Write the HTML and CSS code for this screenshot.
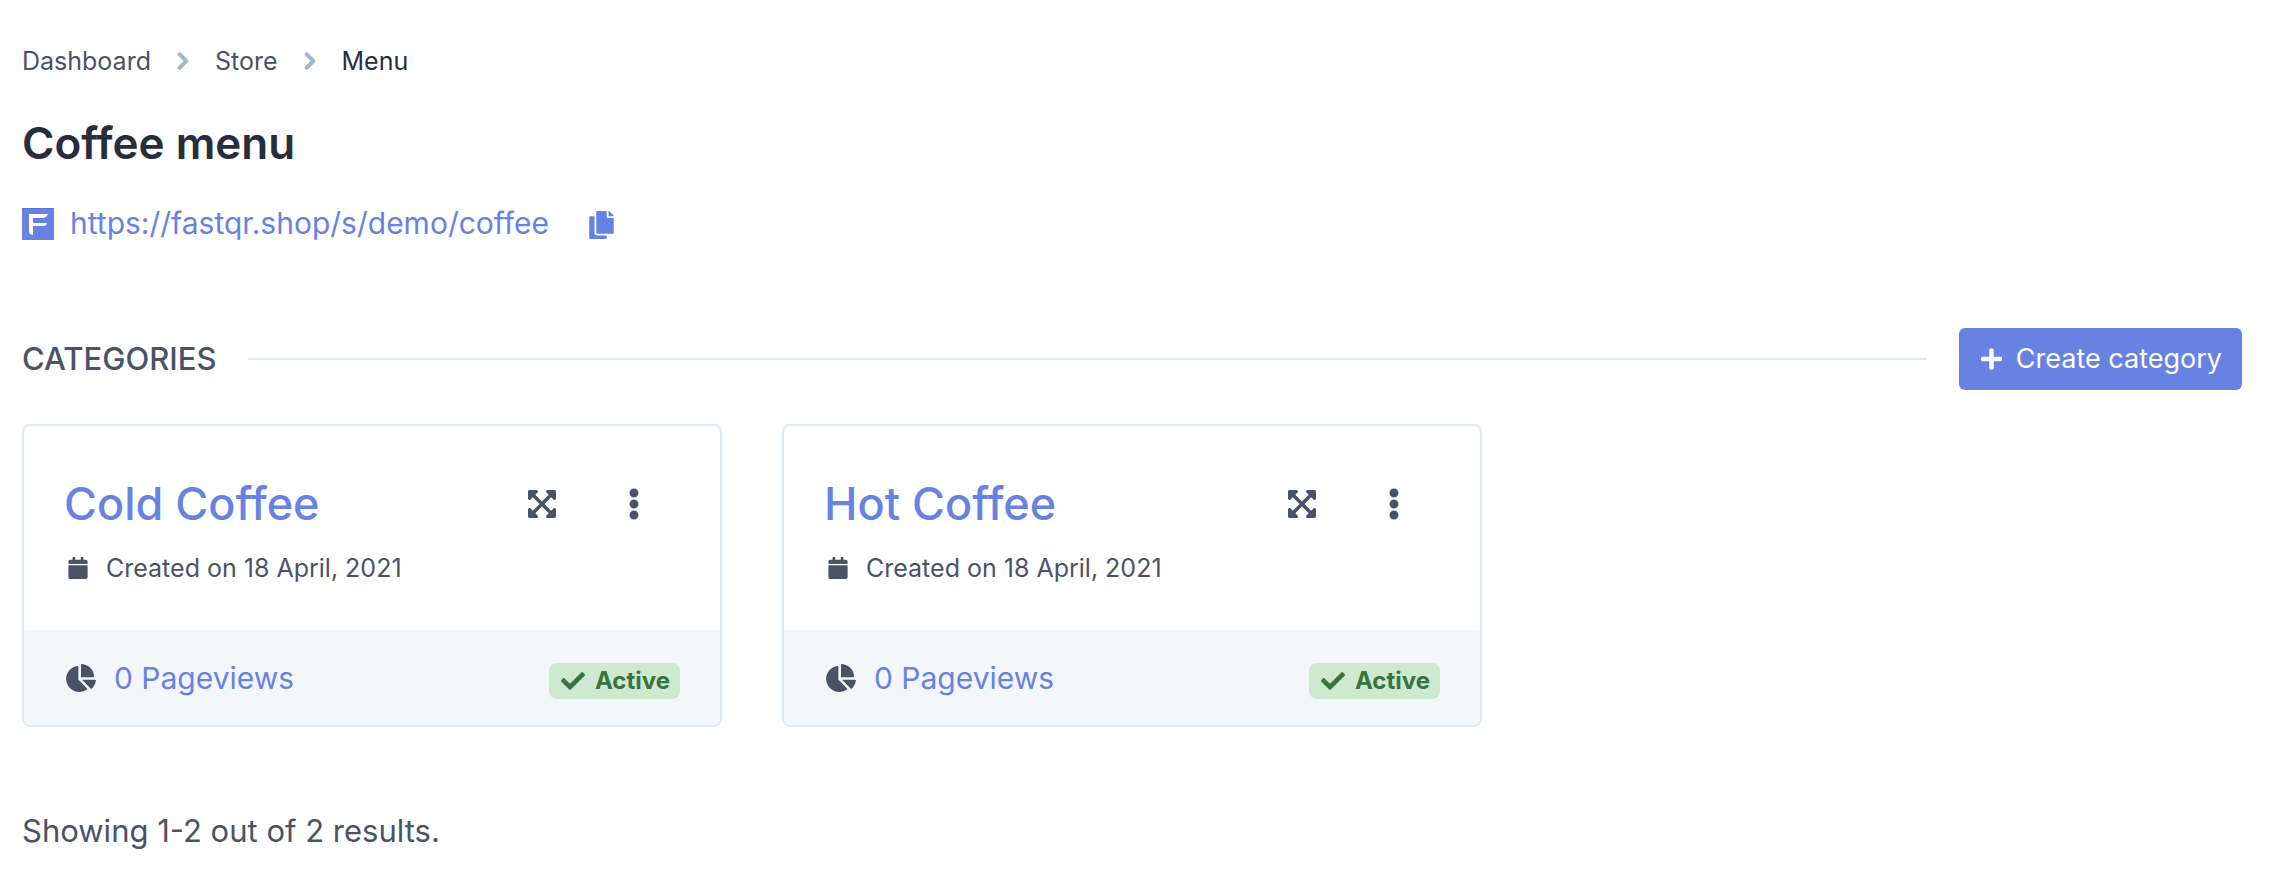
FILE: index.html
```html
<!DOCTYPE html>
<html lang="en">
<head>
<meta charset="utf-8">
<meta name="viewport" content="width=device-width, initial-scale=1">
<title>Coffee menu</title>
<link rel="stylesheet" href="styles.css">
</head>
<body>
<svg class="sprite" aria-hidden="true">
  <symbol id="chevron" viewBox="0 0 20 20"><path d="M7.293 14.707a1 1 0 010-1.414L10.586 10 7.293 6.707a1 1 0 011.414-1.414l4 4a1 1 0 010 1.414l-4 4a1 1 0 01-1.414 0z"/></symbol>
  <symbol id="copy" viewBox="0 0 448 512"><path d="M320 448v40c0 13.255-10.745 24-24 24H24c-13.255 0-24-10.745-24-24V120c0-13.255 10.745-24 24-24h72v296c0 30.879 25.121 56 56 56h168zm0-344V0H152c-13.255 0-24 10.745-24 24v368c0 13.255 10.745 24 24 24h272c13.255 0 24-10.745 24-24V128H344c-13.2 0-24-10.8-24-24zm120.971-31.029L375.029 7.029A24 24 0 0 0 358.059 0H352v96h96v-6.059a24 24 0 0 0-7.029-16.97z"/></symbol>
  <symbol id="plus" viewBox="0 0 448 512"><path d="M416 208H272V64c0-17.67-14.33-32-32-32h-32c-17.67 0-32 14.33-32 32v144H32c-17.67 0-32 14.33-32 32v32c0 17.67 14.33 32 32 32h144v144c0 17.67 14.33 32 32 32h32c17.67 0 32-14.33 32-32V304h144c17.67 0 32-14.33 32-32v-32c0-17.67-14.33-32-32-32z"/></symbol>
  <symbol id="expand" viewBox="0 0 448 512"><path d="M448 344v112a23.94 23.94 0 0 1-24 24H312c-21.39 0-32.09-25.9-17-41l36.2-36.2L224 295.6 116.77 402.9 153 439c15.09 15.1 4.39 41-17 41H24a23.94 23.94 0 0 1-24-24V344c0-21.4 25.89-32.1 41-17l36.19 36.2L184.46 256 77.18 148.7 41 185c-15.1 15.1-41 4.4-41-17V56a23.94 23.94 0 0 1 24-24h112c21.39 0 32.09 25.9 17 41l-36.2 36.2L224 216.4l107.23-107.3L295 73c-15.09-15.1-4.39-41 17-41h112a23.94 23.94 0 0 1 24 24v112c0 21.4-25.89 32.1-41 17l-36.19-36.2L263.54 256l107.28 107.3L407 327.1c15.1-15.2 41-4.5 41 16.9z"/></symbol>
  <symbol id="dots" viewBox="0 0 192 512"><path d="M96 184c39.8 0 72 32.2 72 72s-32.2 72-72 72-72-32.2-72-72 32.2-72 72-72zM24 80c0 39.8 32.2 72 72 72s72-32.2 72-72S135.8 8 96 8 24 40.2 24 80zm0 352c0 39.8 32.2 72 72 72s72-32.2 72-72-32.2-72-72-72-72 32.2-72 72z"/></symbol>
  <symbol id="calendar" viewBox="0 0 448 512"><path d="M12 192h424c6.6 0 12 5.4 12 12v260c0 26.5-21.5 48-48 48H48c-26.5 0-48-21.5-48-48V204c0-6.6 5.4-12 12-12zm436-44v-36c0-26.5-21.5-48-48-48h-48V12c0-6.6-5.4-12-12-12h-40c-6.6 0-12 5.4-12 12v52H160V12c0-6.6-5.4-12-12-12h-40c-6.6 0-12 5.4-12 12v52H48C21.5 64 0 85.5 0 112v36c0 6.6 5.4 12 12 12h424c6.6 0 12-5.4 12-12z"/></symbol>
  <symbol id="pie" viewBox="0 0 544 512"><path d="M527.79 288H290.5l158.03 158.03c6.04 6.04 15.98 6.53 22.19.68 38.7-36.46 65.32-85.61 73.13-140.86 1.34-9.46-6.51-17.85-16.06-17.85zm-15.83-64.8C503.72 103.74 408.26 8.28 288.8.04 279.68-.59 272 7.1 272 16.24V240h223.77c9.14 0 16.82-7.68 16.19-16.8zM224 288V50.71c0-9.55-8.39-17.4-17.84-16.06C86.99 51.49-4.1 155.6.14 280.37 4.5 408.51 114.83 513.59 243.03 511.98c50.4-.63 96.97-16.87 135.26-44.03 7.9-5.6 8.42-17.23 1.57-24.08L224 288z"/></symbol>
  <symbol id="check" viewBox="0 0 512 512"><path d="M173.898 439.404l-166.4-166.4c-9.997-9.997-9.997-26.206 0-36.204l36.203-36.204c9.997-9.998 26.207-9.998 36.204 0L192 312.69 432.095 72.596c9.997-9.997 26.207-9.997 36.204 0l36.203 36.204c9.997 9.997 9.997 26.206 0 36.204l-294.4 294.401c-9.998 9.997-26.207 9.997-36.204-.001z"/></symbol>
</svg>

<main class="page">
  <nav class="breadcrumb" aria-label="Breadcrumb">
    <a href="#">Dashboard</a>
    <svg class="chevron" aria-hidden="true"><use href="#chevron"/></svg>
    <a href="#">Store</a>
    <svg class="chevron" aria-hidden="true"><use href="#chevron"/></svg>
    <a class="current" href="#" aria-current="page">Menu</a>
  </nav>

  <h1 class="title">Coffee menu</h1>

  <div class="share">
    <svg class="logo" viewBox="0 0 32 32" aria-hidden="true">
      <rect width="32" height="32" fill="#6882e2"/>
      <rect width="32" height="1" fill="#5a73cc"/>
      <path fill="#fff" d="M7 6h19l-2 3-2 1H11v5h14l-1 2-2 1H11v9l-3-1-1-2z"/>
    </svg>
    <a class="share-link" href="#">https://fastqr.shop/s/demo/coffee</a>
    <button class="icon-button copy" type="button" aria-label="Copy link"><svg class="icon-copy" aria-hidden="true"><use href="#copy"/></svg></button>
  </div>

  <div class="section-head">
    <h2 class="section-title">CATEGORIES</h2>
    <hr class="rule">
    <button class="create" type="button"><svg class="icon-plus" aria-hidden="true"><use href="#plus"/></svg>Create category</button>
  </div>

  <section class="cards">
    <article class="card">
      <div class="card-body">
        <div class="card-head">
          <h3 class="card-title"><a href="#">Cold Coffee</a></h3>
          <div class="card-tools">
            <button class="icon-button" type="button" aria-label="Move"><svg class="icon-expand" aria-hidden="true"><use href="#expand"/></svg></button>
            <button class="icon-button" type="button" aria-label="More"><svg class="icon-dots" aria-hidden="true"><use href="#dots"/></svg></button>
          </div>
        </div>
        <p class="created"><svg class="icon-calendar" aria-hidden="true"><use href="#calendar"/></svg>Created on 18 April, 2021</p>
      </div>
      <div class="card-foot">
        <a class="views" href="#"><svg class="icon-pie" aria-hidden="true"><use href="#pie"/></svg>0 Pageviews</a>
        <span class="badge"><svg class="icon-check" aria-hidden="true"><use href="#check"/></svg>Active</span>
      </div>
    </article>
    <article class="card">
      <div class="card-body">
        <div class="card-head">
          <h3 class="card-title"><a href="#">Hot Coffee</a></h3>
          <div class="card-tools">
            <button class="icon-button" type="button" aria-label="Move"><svg class="icon-expand" aria-hidden="true"><use href="#expand"/></svg></button>
            <button class="icon-button" type="button" aria-label="More"><svg class="icon-dots" aria-hidden="true"><use href="#dots"/></svg></button>
          </div>
        </div>
        <p class="created"><svg class="icon-calendar" aria-hidden="true"><use href="#calendar"/></svg>Created on 18 April, 2021</p>
      </div>
      <div class="card-foot">
        <a class="views" href="#"><svg class="icon-pie" aria-hidden="true"><use href="#pie"/></svg>0 Pageviews</a>
        <span class="badge"><svg class="icon-check" aria-hidden="true"><use href="#check"/></svg>Active</span>
      </div>
    </article>
  </section>

  <p class="summary">Showing 1-2 out of 2 results.</p>
</main>
</body>
</html>
```
FILE: styles.css
```css
:root {
  --ink: #4a5365;
  --dark: #272d3b;
  --accent: #6882e2;
  --line: #deeaf1;
}

* { box-sizing: border-box; }

body {
  margin: 0;
  background: #fff;
  color: var(--ink);
  font-family: Inter, "Liberation Sans", sans-serif;
  font-size: 30px;
}

h1, h2, h3, p { margin: 0; font-weight: 500; }
a { color: inherit; text-decoration: none; }
button { border: 0; padding: 0; background: none; font: inherit; color: inherit; cursor: pointer; }
svg { display: block; flex: none; fill: currentColor; }
.sprite { position: absolute; width: 0; height: 0; }

.page { padding: 41px 42px 24px 22px; }

.breadcrumb {
  display: flex;
  align-items: center;
  gap: 15px;
  font-size: 25px;
  line-height: 40px;
}
.chevron {
  width: 34px;
  height: 34px;
  color: #a5b4c8;
  stroke: currentColor;
  stroke-width: 0.4;
}
.current { color: var(--dark); }

.title {
  margin-top: 32px;
  color: var(--dark);
  font-size: 44px;
  font-weight: 600;
  line-height: 60px;
}

.share {
  display: flex;
  align-items: center;
  margin-top: 27px;
  color: var(--accent);
  line-height: 48px;
}
.logo { width: 32px; height: 32px; margin-right: 16px; }
.share-link { padding-bottom: 2px; line-height: 46px; }
.copy { margin: 2px 0 0 40px; }
.icon-copy { width: 25px; height: 28px; }

.section-head {
  display: flex;
  align-items: center;
  gap: 32px;
  margin-top: 80px;
}
.section-title { font-size: 31px; line-height: 48px; }
.rule { flex: 1; height: 2px; margin: 0; border: 0; background: var(--line); }
.create {
  display: flex;
  align-items: center;
  gap: 14px;
  padding: 0 20px 0 22px;
  border-radius: 6px;
  background: var(--accent);
  color: #fff;
  font-size: 27px;
  line-height: 62px;
}
.icon-plus { width: 21px; height: 24px; }

.cards {
  display: grid;
  grid-template-columns: repeat(3, minmax(0, 1fr));
  gap: 60px;
  margin-top: 34px;
}
.card {
  overflow: hidden;
  border: 2px solid var(--line);
  border-radius: 8px;
}
.card-body { padding: 48px 40px 42px; }
.card-head {
  display: flex;
  align-items: center;
  justify-content: space-between;
}
.card-title {
  color: var(--accent);
  font-size: 45px;
  line-height: 60px;
}
.card-tools { display: flex; align-items: center; gap: 72px; padding-right: 40px; }
.icon-expand { width: 28px; height: 32px; }
.icon-dots { width: 12px; height: 32px; }
.created {
  display: flex;
  align-items: center;
  gap: 18px;
  margin-top: 14px;
  padding-left: 4px;
  font-size: 25px;
  font-weight: 400;
  line-height: 40px;
}
.icon-calendar { width: 20px; height: 22px; }
.card-foot {
  display: flex;
  align-items: center;
  justify-content: space-between;
  padding: 24px 40px 23px;
  background: #f3f7fa;
}
.views {
  display: flex;
  align-items: center;
  gap: 18px;
  padding-left: 2px;
  color: var(--accent);
  line-height: 48px;
}
.icon-pie { width: 30px; height: 28px; color: var(--ink); }
.badge {
  display: flex;
  align-items: center;
  gap: 10px;
  margin-top: 6px;
  padding: 0 10px 0 12px;
  border-radius: 8px;
  background: #cdead0;
  color: #3b733f;
  font-size: 24px;
  font-weight: 700;
  line-height: 36px;
}
.icon-check { width: 24px; height: 24px; }

.summary { margin-top: 80px; font-size: 31px; font-weight: 400; line-height: 48px; }
```
